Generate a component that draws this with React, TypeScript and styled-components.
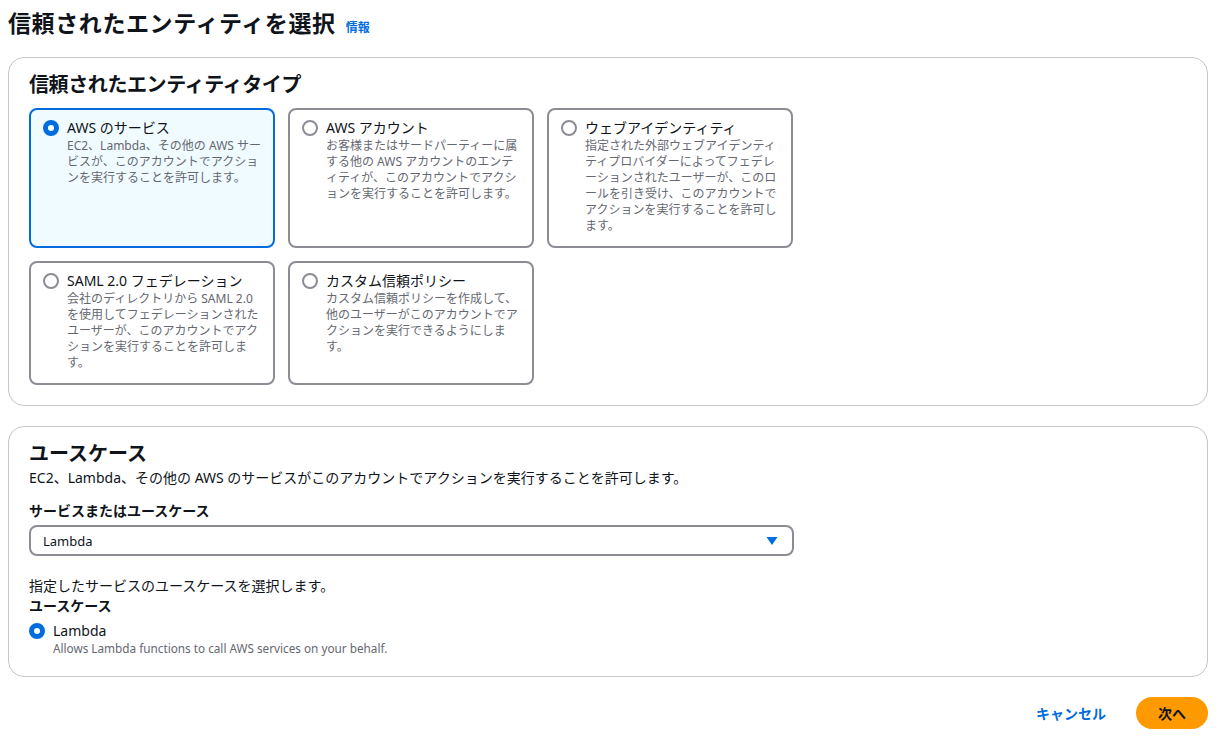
import styled, { createGlobalStyle } from "styled-components";

const GlobalStyle = createGlobalStyle`
  body {
    margin: 0;
    background: #ffffff;
    font-family: "Noto Sans", "Noto Sans CJK JP", sans-serif;
    color: #0f141a;
  }
`;

type Entity = {
  id: string;
  title: string;
  description: string;
};

const entities: Entity[] = [
  {
    id: "aws-service",
    title: "AWS のサービス",
    description: "EC2、Lambda、その他の AWS サービスが、このアカウントでアクションを実行することを許可します。",
  },
  {
    id: "aws-account",
    title: "AWS アカウント",
    description:
      "お客様またはサードパーティーに属する他の AWS アカウントのエンティティが、このアカウントでアクションを実行することを許可します。",
  },
  {
    id: "web-identity",
    title: "ウェブアイデンティティ",
    description:
      "指定された外部ウェブアイデンティティプロバイダーによってフェデレーションされたユーザーが、このロールを引き受け、このアカウントでアクションを実行することを許可します。",
  },
  {
    id: "saml",
    title: "SAML 2.0 フェデレーション",
    description:
      "会社のディレクトリから SAML 2.0 を使用してフェデレーションされたユーザーが、このアカウントでアクションを実行することを許可します。",
  },
  {
    id: "custom",
    title: "カスタム信頼ポリシー",
    description: "カスタム信頼ポリシーを作成して、他のユーザーがこのアカウントでアクションを実行できるようにします。",
  },
];

const Page = styled.div`
  padding: 8px 10px 12px 8px;
`;

const Header = styled.div`
  display: flex;
  align-items: baseline;
  gap: 10px;
  margin-bottom: 19px;
`;

const Title = styled.h1`
  margin: 0;
  font-size: 23px;
  line-height: 30px;
  font-weight: 700;
  letter-spacing: 0.6px;
`;

const InfoLink = styled.a`
  font-size: 12px;
  font-weight: 700;
  color: #006ce0;
  text-decoration: none;
`;

const Panel = styled.section<{ $bottom: number }>`
  border: 1px solid #c6c6cd;
  border-radius: 16px;
  padding: 14px 20px ${(p) => p.$bottom}px 20px;
  & + & {
    margin-top: 20px;
  }
`;

const PanelTitle = styled.h2<{ $spacing: number }>`
  margin: 0;
  font-size: 20px;
  line-height: 26px;
  letter-spacing: ${(p) => p.$spacing}px;
  font-weight: 700;
`;

const CardGrid = styled.div`
  display: grid;
  grid-template-columns: repeat(3, 246px);
  gap: 13px;
  margin-top: 10px;
`;

const Card = styled.label<{ $active: boolean }>`
  display: flex;
  gap: 8px;
  padding: 8px 10px 12px 12px;
  border: 2px solid ${(p) => (p.$active ? "#006ce0" : "#8c8c94")};
  background: ${(p) => (p.$active ? "#f0fbff" : "#ffffff")};
  border-radius: 8px;
  cursor: pointer;
`;

const Radio = styled.span<{ $checked: boolean }>`
  flex: none;
  box-sizing: border-box;
  width: 16px;
  height: 16px;
  margin-top: 2px;
  border-radius: 50%;
  border: ${(p) => (p.$checked ? "5px solid #006ce0" : "2px solid #8c8c94")};
  background: #ffffff;
`;

const CardBody = styled.div`
  display: flex;
  flex-direction: column;
`;

const CardTitle = styled.span`
  font-size: 14px;
  line-height: 20px;
  color: #0f141a;
`;

const CardText = styled.span`
  font-size: 12px;
  line-height: 16px;
  color: #656871;
`;

const Lead = styled.p`
  margin: 1px 0 0;
  font-size: 14px;
  line-height: 20px;
`;

const FieldLabel = styled.div<{ $top: number }>`
  margin-top: ${(p) => p.$top}px;
  font-size: 14px;
  line-height: 20px;
  font-weight: 700;
`;

const Select = styled.div`
  display: flex;
  align-items: center;
  justify-content: space-between;
  width: 765px;
  height: 31px;
  box-sizing: border-box;
  margin-top: 4px;
  padding: 0 14px 0 12px;
  border: 2px solid #8c8c94;
  border-radius: 8px;
  font-size: 13px;
`;

const Hint = styled.p`
  margin: 20px 0 0;
  font-size: 14px;
  line-height: 20px;
`;

const Option = styled.div`
  display: flex;
  gap: 8px;
  margin-top: 5px;
`;

const OptionText = styled.span`
  font-size: 11.75px;
  line-height: 14px;
  color: #656871;
`;

const Footer = styled.div`
  display: flex;
  justify-content: flex-end;
  align-items: center;
  gap: 10px;
  margin-top: 20px;
`;

const CancelButton = styled.button`
  border: none;
  background: none;
  padding: 4px 20px;
  font-family: inherit;
  font-size: 14px;
  font-weight: 700;
  color: #006ce0;
`;

const NextButton = styled.button`
  border: none;
  background: #ff9900;
  border-radius: 16px;
  width: 72px;
  height: 32px;
  font-family: inherit;
  font-size: 14px;
  font-weight: 700;
  color: #0f141a;
`;

const Caret = () => (
  <svg width="12" height="10" viewBox="0 0 12 10">
    <path d="M0.5 1 H11.5 L6 9 Z" fill="#006ce0" />
  </svg>
);

export default function App() {
  const selected = "aws-service";
  return (
    <Page>
      <GlobalStyle />
      <Header>
        <Title>信頼されたエンティティを選択</Title>
        <InfoLink href="#">情報</InfoLink>
      </Header>

      <Panel $bottom={20}>
        <PanelTitle $spacing={-0.4}>信頼されたエンティティタイプ</PanelTitle>
        <CardGrid>
          {entities.map((e) => (
            <Card key={e.id} $active={e.id === selected}>
              <Radio $checked={e.id === selected} />
              <CardBody>
                <CardTitle>{e.title}</CardTitle>
                <CardText>{e.description}</CardText>
              </CardBody>
            </Card>
          ))}
        </CardGrid>
      </Panel>

      <Panel $bottom={21}>
        <PanelTitle $spacing={0}>ユースケース</PanelTitle>
        <Lead>EC2、Lambda、その他の AWS のサービスがこのアカウントでアクションを実行することを許可します。</Lead>
        <FieldLabel $top={13}>サービスまたはユースケース</FieldLabel>
        <Select>
          <span>Lambda</span>
          <Caret />
        </Select>
        <Hint>指定したサービスのユースケースを選択します。</Hint>
        <FieldLabel $top={0}>ユースケース</FieldLabel>
        <Option>
          <Radio $checked />
          <CardBody>
            <CardTitle>Lambda</CardTitle>
            <OptionText>Allows Lambda functions to call AWS services on your behalf.</OptionText>
          </CardBody>
        </Option>
      </Panel>

      <Footer>
        <CancelButton>キャンセル</CancelButton>
        <NextButton>次へ</NextButton>
      </Footer>
    </Page>
  );
}
